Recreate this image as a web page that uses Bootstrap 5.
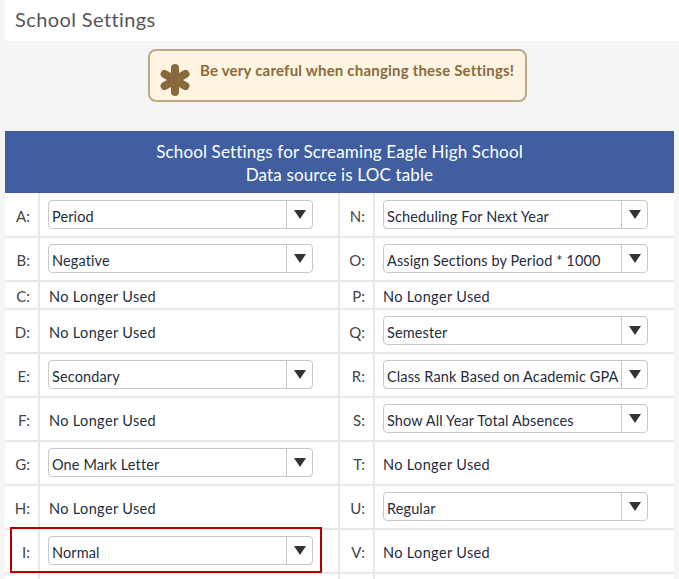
<!DOCTYPE html>
<html lang="en">

<head>
    <meta charset="UTF-8">
    <meta name="viewport" content="width=device-width, initial-scale=1.0">
    <title>School Settings</title>

    <link rel="stylesheet" href="https://cdn.jsdelivr.net/npm/bootstrap@5.3.0/dist/css/bootstrap.min.css">

    <style>
        html, body {
            height: 579px;
            overflow: hidden;
        }

        body {
            font-family: "Lato", "Liberation Sans", sans-serif;
            background-color: #f5f5f5;
            color: #333;
            padding-left: 5px;
        }

        .page-title {
            height: 41px;
            padding: 7px 10px 0;
            font-size: 20px;
            line-height: 24px;
            color: #555;
            letter-spacing: .4px;
            background: #fff;
        }

        .warn-wrap {
            height: 90px;
            padding: 8px 9px 0 0;
        }

        .warn-box {
            width: 379px;
            height: 53px;
            padding: 7px 10px 0 10px;
            column-gap: 10px;
            border: 2px solid #bda98a;
            border-radius: 8px;
            background: #fdf5e2;
            color: #8a6a3c;
            font-size: 15px;
            font-weight: 700;
            line-height: 24px;
            letter-spacing: .2px;
        }

        .warn-box svg {
            flex-shrink: 0;
            margin-top: 6px;
        }

        .settings-wrap {
            width: 669px;
        }

        .settings-head {
            height: 62px;
            padding-top: 9px;
            background: #415fa0;
            color: #fff;
            font-size: 17px;
            line-height: 23px;
            letter-spacing: .15px;
            text-align: center;
        }

        .settings-table {
            width: 669px;
            table-layout: fixed;
            border-collapse: separate;
            border-spacing: 0;
            background: #fff;
            font-size: 14.5px;
        }

        .settings-table td {
            height: 44px;
            padding: 3px 0 0 8px;
            border-bottom: 2px solid #e9e9e9;
            vertical-align: middle;
            color: #1f2d3d;
            letter-spacing: .35px;
        }

        .settings-table tr:first-child td {
            height: 45px;
        }

        .settings-table td.has-pick {
            padding-top: 0;
            padding-bottom: 1px;
        }

        .settings-table tr:first-child td.has-pick {
            padding-bottom: 0;
        }

        .settings-table td.left-text {
            padding-left: 9px;
        }

        .settings-table tr.short td {
            height: 28px;
        }

        .settings-table tr.end td {
            height: 5px;
            padding: 0;
            border-bottom: 0;
        }

        .settings-table td.lbl {
            padding: 3px 8px 0 0;
            text-align: right;
            color: #444;
            font-size: 15px;
            letter-spacing: 0;
        }

        .settings-table tr:first-child td.lbl {
            padding-top: 4px;
        }

        .settings-table td + td {
            border-left: 2px solid #e9e9e9;
        }

        .pick {
            display: block;
            width: 265px;
            height: 29px;
            padding: 5px 26px 0 3px;
            border: 1px solid #c8c8c8;
            border-radius: 4px;
            appearance: none;
            color: #1f2d3d;
            font-size: 14.5px;
            letter-spacing: .12px;
            background-color: #fff;
            background-image:
                linear-gradient(#c8c8c8, #c8c8c8),
                url("data:image/svg+xml,%3Csvg xmlns='http://www.w3.org/2000/svg' width='12' height='9'%3E%3Cpath d='M0 0h12L6 9z' fill='%23333'/%3E%3C/svg%3E");
            background-repeat: no-repeat;
            background-size: 1px 100%, 12px 9px;
            background-position: right 25px top, right 6px center;
        }

        .warn-mark {
            position: absolute;
            left: 10px;
            top: 527px;
            width: 312px;
            height: 46px;
            border: 2px solid #b80000;
            pointer-events: none;
        }
    </style>
</head>

<body>

    <div class="page-title">School Settings</div>

    <div class="warn-wrap d-flex justify-content-center">
        <div class="warn-box d-flex">
            <svg width="30" height="32" viewBox="0 0 30 32">
                <g stroke="#8a6a3c" stroke-width="8" stroke-linecap="round">
                    <path d="M15 4v24"/>
                    <path d="M4.600 10l20.800 12"/>
                    <path d="M25.400 10l-20.800 12"/>
                </g>
            </svg>
            <span>Be very careful when changing these Settings!</span>
        </div>
    </div>

    <div class="settings-wrap">
        <div class="settings-head">School Settings for Screaming Eagle High School<br>Data source is LOC table</div>
        <table class="settings-table">
            <colgroup>
                <col style="width: 33px">
                <col style="width: 300px">
                <col style="width: 35px">
                <col style="width: 301px">
            </colgroup>
            <tbody>
                <tr>
                    <td class="lbl">A:</td>
                    <td class="has-pick"><select class="pick"><option>Period</option></select></td>
                    <td class="lbl">N:</td>
                    <td class="has-pick"><select class="pick"><option>Scheduling For Next Year</option></select></td>
                </tr>
                <tr>
                    <td class="lbl">B:</td>
                    <td class="has-pick"><select class="pick"><option>Negative</option></select></td>
                    <td class="lbl">O:</td>
                    <td class="has-pick"><select class="pick"><option>Assign Sections by Period * 1000</option></select></td>
                </tr>
                <tr class="short">
                    <td class="lbl">C:</td>
                    <td class="left-text">No Longer Used</td>
                    <td class="lbl">P:</td>
                    <td>No Longer Used</td>
                </tr>
                <tr>
                    <td class="lbl">D:</td>
                    <td class="left-text">No Longer Used</td>
                    <td class="lbl">Q:</td>
                    <td class="has-pick"><select class="pick"><option>Semester</option></select></td>
                </tr>
                <tr>
                    <td class="lbl">E:</td>
                    <td class="has-pick"><select class="pick"><option>Secondary</option></select></td>
                    <td class="lbl">R:</td>
                    <td class="has-pick"><select class="pick"><option>Class Rank Based on Academic GPA</option></select></td>
                </tr>
                <tr>
                    <td class="lbl">F:</td>
                    <td class="left-text">No Longer Used</td>
                    <td class="lbl">S:</td>
                    <td class="has-pick"><select class="pick"><option>Show All Year Total Absences</option></select></td>
                </tr>
                <tr>
                    <td class="lbl">G:</td>
                    <td class="has-pick"><select class="pick"><option>One Mark Letter</option></select></td>
                    <td class="lbl">T:</td>
                    <td>No Longer Used</td>
                </tr>
                <tr>
                    <td class="lbl">H:</td>
                    <td class="left-text">No Longer Used</td>
                    <td class="lbl">U:</td>
                    <td class="has-pick"><select class="pick"><option>Regular</option></select></td>
                </tr>
                <tr>
                    <td class="lbl">I:</td>
                    <td class="has-pick"><select class="pick"><option>Normal</option></select></td>
                    <td class="lbl">V:</td>
                    <td>No Longer Used</td>
                </tr>
                <tr class="end">
                    <td class="lbl"></td>
                    <td></td>
                    <td class="lbl"></td>
                    <td></td>
                </tr>
            </tbody>
        </table>
    </div>

    <div class="warn-mark"></div>

</body>

</html>
